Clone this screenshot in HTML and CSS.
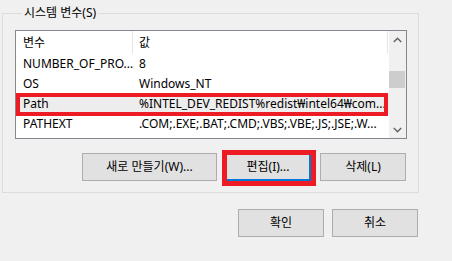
FILE: index.html
```html
<!DOCTYPE html>
<html lang="ko">
<head>
<meta charset="utf-8">
<link rel="stylesheet" href="styles.css">
</head>
<body>
<div class="window">
  <fieldset class="group">
    <legend class="group-label">시스템 변수(S)</legend>
    <div class="listview">
      <div class="lv-content">
        <div class="lv-header">
          <div class="hcol c1">변수</div>
          <div class="hcol c2">값</div>
        </div>
        <div class="row"><div class="c1">NUMBER_OF_PRO...</div><div class="c2">8</div></div>
        <div class="row"><div class="c1">OS</div><div class="c2">Windows_NT</div></div>
        <div class="row selected"><div class="c1">Path</div><div class="c2">%INTEL_DEV_REDIST%redist₩intel64₩com...</div><span class="annot annot-row"></span></div>
        <div class="row"><div class="c1">PATHEXT</div><div class="c2">.COM;.EXE;.BAT;.CMD;.VBS;.VBE;.JS;.JSE;.W...</div></div>
      </div>
      <div class="scrollbar">
        <div class="sb-btn">
          <svg width="9" height="6" viewBox="0 0 9 6"><polyline points="0.8,5 4.5,1.3 8.2,5" fill="none" stroke="#606060" stroke-width="1.4"/></svg>
        </div>
        <div class="sb-track"><div class="sb-thumb"></div></div>
        <div class="sb-btn">
          <svg width="9" height="6" viewBox="0 0 9 6"><polyline points="0.8,1 4.5,4.7 8.2,1" fill="none" stroke="#606060" stroke-width="1.4"/></svg>
        </div>
      </div>
    </div>
    <div class="btn-row">
      <button class="btn btn-wide">새로 만들기(W)...</button>
      <div class="annot-wrap">
        <button class="btn btn-default">편집(I)...</button>
        <span class="annot annot-btn"></span>
      </div>
      <button class="btn">삭제(L)</button>
    </div>
  </fieldset>
  <div class="dlg-row">
    <button class="btn">확인</button>
    <button class="btn">취소</button>
  </div>
</div>
</body>
</html>
```
FILE: styles.css
```css
* { box-sizing: border-box; }
html, body {
  margin: 0;
  padding: 0;
  background: #f0f0f0;
}
body {
  font-family: "Noto Sans", "Noto Sans CJK KR", sans-serif;
  font-size: 12px;
  color: #000;
  width: 452px;
  height: 261px;
  overflow: hidden;
}
.window {
  padding: 5px 0 0 2px;
  width: 419px;
}
.group {
  margin: 0;
  padding: 0 11px 11px 12px;
  border: 1px solid #dcdcdc;
  width: 417px;
}
.group-label {
  margin-left: 7px;
  padding: 0 2px;
  line-height: 16px;
  height: 16px;
  font-size: 12px;
}
.listview {
  margin-top: 9px;
  width: 392px;
  height: 109px;
  border: 1px solid #828790;
  background: #fff;
  display: flex;
}
.lv-content {
  width: 373px;
  display: flex;
  flex-direction: column;
}
.lv-header {
  display: flex;
  height: 23px;
}
.hcol {
  display: flex;
  align-items: center;
  border-right: 1px solid #e5e5e5;
  line-height: 16px;
}
.c1 {
  width: 117px;
  padding-left: 7px;
  flex: none;
  white-space: nowrap;
  overflow: hidden;
}
.c2 {
  width: 255px;
  padding-left: 6px;
  flex: none;
  white-space: nowrap;
  overflow: hidden;
}
.row {
  display: flex;
  align-items: center;
  height: 20px;
  line-height: 16px;
  position: relative;
}
.row .c1 { padding-left: 7px; }
.row .c2 { padding-left: 6px; }
.row.selected { background: #ededed; }
.annot {
  position: absolute;
  border-style: solid;
  border-color: #ed1c24;
  pointer-events: none;
}
.annot-row {
  left: 0;
  right: 1px;
  top: -1px;
  bottom: -2px;
  border-width: 4px;
}
.scrollbar {
  width: 17px;
  background: #f0f0f0;
  display: flex;
  flex-direction: column;
}
.sb-btn {
  height: 17px;
  display: flex;
  align-items: center;
  justify-content: center;
}
.sb-track {
  flex: 1;
  padding: 23px 1px 0 0;
}
.sb-thumb {
  height: 17px;
  background: #cdcdcd;
}
.btn-row {
  margin-top: 14px;
  display: flex;
  justify-content: flex-end;
  padding-right: 1px;
}
.btn {
  font-family: "Noto Sans", "Noto Sans CJK KR", sans-serif;
  font-size: 12px;
  color: #000;
  width: 86px;
  height: 28px;
  margin: 0;
  padding: 0;
  background: #e1e1e1;
  border: 1px solid #adadad;
  line-height: 16px;
}
.btn-wide { width: 135px; margin-right: 8px; }
.annot-wrap {
  position: relative;
  margin-right: 9px;
}
.btn-default {
  border: 2px solid #0078d7;
  display: block;
}
.annot-btn {
  left: -3px;
  right: -5px;
  top: -3px;
  bottom: -5px;
  border-width: 5px;
}
.dlg-row {
  margin-top: 16px;
  display: flex;
  justify-content: flex-end;
  gap: 8px;
  padding-right: 1px;
}
```
